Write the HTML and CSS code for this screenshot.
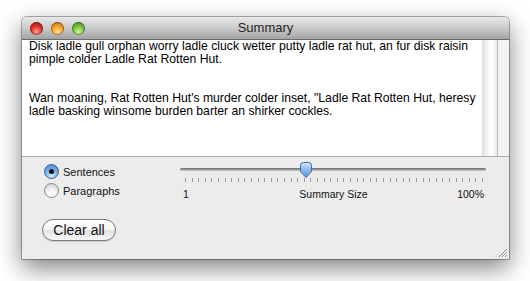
FILE: index.html
```html
<!DOCTYPE html>
<html lang="en">
<head>
    <meta charset="UTF-8">
    <title>Summary</title>
    <link rel="stylesheet" href="styles.css">
</head>
<body>
    <div class="window">
        <div class="titlebar">
            <div class="lights">
                <span class="light red"></span>
                <span class="light orange"></span>
                <span class="light green"></span>
            </div>
            <div class="title">Summary</div>
        </div>

        <div class="scrollview">
            <div class="text">
                <p>Disk ladle gull orphan worry ladle cluck wetter putty ladle rat hut, an fur disk raisin<br>pimple colder Ladle Rat Rotten Hut.</p>
                <p>Wan moaning, Rat Rotten Hut's murder colder inset, "Ladle Rat Rotten Hut, heresy<br>ladle basking winsome burden barter an shirker cockles.</p>
            </div>
            <div class="scroller"></div>
            <div class="strip"></div>
        </div>

        <div class="controls">
            <div class="options">
                <label class="radio"><span class="dot on"></span>Sentences</label>
                <label class="radio"><span class="dot"></span>Paragraphs</label>
                <button class="button">Clear all</button>
            </div>
            <div class="slider">
                <div class="track">
                    <svg class="thumb" width="14" height="17" viewBox="0 0 14 17">
                        <defs>
                            <linearGradient id="tg" x1="0" y1="0" x2="0" y2="1">
                                <stop offset="0" stop-color="#d6e8fb"/>
                                <stop offset="0.45" stop-color="#8fbdf0"/>
                                <stop offset="1" stop-color="#5b9ce6"/>
                            </linearGradient>
                        </defs>
                        <path d="M1.5 3.5 a3 3 0 0 1 3 -3 h5 a3 3 0 0 1 3 3 v6 l-5.5 6 l-5.5 -6 z" fill="url(#tg)" stroke="#41689c" stroke-width="1"/>
                    </svg>
                </div>
                <div class="ticks"></div>
                <div class="labels">
                    <span class="min">1</span>
                    <span class="name">Summary Size</span>
                    <span class="max">100%</span>
                </div>
            </div>
        </div>

        <svg class="grip" width="11" height="11" viewBox="0 0 11 11">
            <path d="M10 2 L2 10 M10 5 L5 10 M10 8 L8 10" stroke="#8d8d8d" stroke-width="1"/>
            <path d="M10.8 2.8 L2.8 10.8 M10.8 5.8 L5.8 10.8" stroke="#ffffff" stroke-width="0.8"/>
        </svg>
    </div>
</body>
</html>
```

FILE: styles.css
```css
body {
    margin: 0;
    background: #ffffff;
    font-family: "Liberation Sans", Arial, sans-serif;
    width: 530px;
    height: 281px;
    overflow: hidden;
}
.window {
    position: relative;
    margin: 17px 0 0 22px;
    width: 487px;
    height: 242px;
    background: #ececec;
    border-radius: 5px 5px 0 0;
    box-shadow: 0 0 0 1px rgba(0, 0, 0, 0.3), 0 9px 24px rgba(0, 0, 0, 0.5);
    display: flex;
    flex-direction: column;
}
.titlebar {
    position: relative;
    height: 22px;
    border-radius: 5px 5px 0 0;
    background: linear-gradient(#e8e8e8, #cbcbcb 50%, #a3a3a3);
    border-bottom: 1px solid #6a6a6a;
    display: flex;
    align-items: center;
}
.lights {
    display: flex;
    gap: 8px;
    padding-left: 8px;
    padding-top: 1px;
}
.light {
    width: 13px;
    height: 13px;
    border-radius: 50%;
    box-shadow: inset 0 0 0 1px rgba(0, 0, 0, 0.35);
}
.red {
    background: radial-gradient(circle at 50% 75%, #ff9d94 0, #e0352b 45%, #a0130c 100%);
}
.orange {
    background: radial-gradient(circle at 50% 75%, #ffe39a 0, #f7a12b 45%, #b66a0b 100%);
}
.green {
    background: radial-gradient(circle at 50% 75%, #d4f7a0 0, #77c63a 45%, #3b8318 100%);
}
.title {
    position: absolute;
    left: 0;
    right: 0;
    top: 3px;
    text-align: center;
    font-size: 13px;
    color: #1f1f1f;
}
.scrollview {
    display: flex;
    height: 116px;
    border-bottom: 1px solid #a9a9a9;
}
.text {
    flex: 1;
    min-width: 0;
    background: #ffffff;
    padding: 0 0 0 7px;
    font-size: 12.2px;
    line-height: 13px;
    color: #000;
    overflow: hidden;
    white-space: nowrap;
}
.text p {
    margin: 0 0 26px 0;
}
.scroller {
    width: 15px;
    background: linear-gradient(to right, #dcdcdc, #f7f7f7 40%, #ffffff 60%, #e9e9e9);
    border-right: 1px solid #bdbdbd;
}
.strip {
    flex: none;
    width: 11px;
    background: #f3f3f3;
}
.controls {
    display: flex;
    padding: 5px 23px 0 20px;
}
.options {
    width: 138px;
    display: flex;
    flex-direction: column;
    align-items: flex-start;
}
.radio {
    display: flex;
    align-items: center;
    gap: 4px;
    height: 19px;
    font-size: 11px;
    color: #111;
    margin-left: 2px;
}
.dot {
    width: 13px;
    height: 13px;
    border-radius: 50%;
    border: 1px solid #8a8a8a;
    background: radial-gradient(circle at 50% 80%, #ffffff 0, #f2f2f2 40%, #c9c9c9 100%);
    display: flex;
    align-items: center;
    justify-content: center;
}
.dot.on {
    border-color: #3c5f8f;
    background: radial-gradient(circle at 50% 85%, #d8ecff 0, #7eb6f0 45%, #3c7fd0 100%);
}
.dot.on::after {
    content: "";
    width: 5px;
    height: 5px;
    border-radius: 50%;
    background: #111;
}
.button {
    margin-top: 19px;
    width: 74px;
    height: 22px;
    border: 1px solid #7d7d7d;
    border-radius: 11px;
    background: linear-gradient(#ffffff, #f4f4f4 50%, #e2e2e2 51%, #f6f6f6);
    font-family: "Liberation Sans", Arial, sans-serif;
    font-size: 14px;
    color: #111;
    padding: 0;
    box-shadow: 0 1px 1px rgba(0, 0, 0, 0.15);
}
.slider {
    flex: 1;
    padding-top: 5px;
}
.track {
    position: relative;
    height: 3px;
    margin-top: 1px;
    border-radius: 2px;
    background: linear-gradient(#6a6a6a, #a0a0a0 60%, #d0d0d0);
}
.thumb {
    position: absolute;
    left: 119px;
    top: -6px;
}
.ticks {
    margin: 7px 3px 0 5px;
    height: 4px;
    background: repeating-linear-gradient(to right, #9c9c9c 0, #9c9c9c 1px, transparent 1px, transparent 6.6px);
}
.labels {
    display: grid;
    grid-template-columns: 1fr auto 1fr;
    margin-top: 6px;
    padding: 0 2px 0 3px;
    font-size: 10.5px;
    color: #111;
}
.max {
    text-align: right;
}
.grip {
    position: absolute;
    right: 1px;
    bottom: 1px;
}
```
